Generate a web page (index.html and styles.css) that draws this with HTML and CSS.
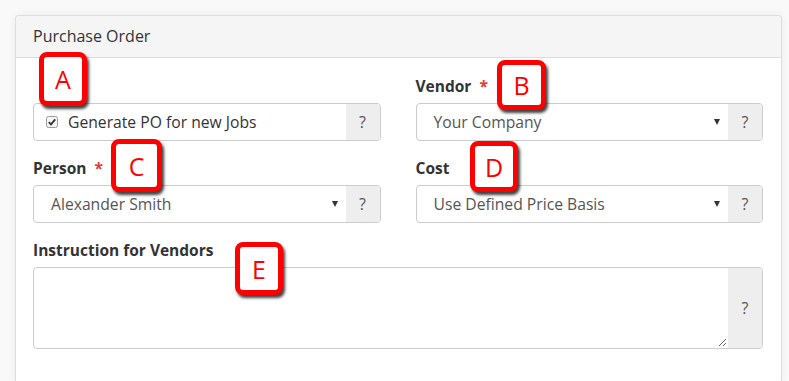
FILE: index.html
```html
<!DOCTYPE html>
<html>

<head>
  <title>Purchase Order</title>
  <link rel="stylesheet" href="styles.css">
</head>

<body>
  <div class="panel">
    <div class="panel-heading">Purchase Order</div>
    <div class="panel-body">
      <div class="form-grid">
        <div class="field">
          <div class="label"></div>
          <div class="group">
            <div class="control check-control">
              <svg class="checkbox" width="12" height="12" viewBox="0 0 12 12">
                <rect x="0.5" y="0.5" width="11" height="11" rx="2" fill="#f4f4f4" stroke="#9a9a9a" />
                <path d="M2.8 6.2 L5 8.4 L9.2 3.4" fill="none" stroke="#333" stroke-width="1.8" />
              </svg>
              <span>Generate PO for new Jobs</span>
            </div>
            <div class="addon">?</div>
          </div>
        </div>
        <div class="field">
          <div class="label">Vendor <span class="req">*</span></div>
          <div class="group">
            <div class="control select">
              <span>Your Company</span>
              <span class="caret"></span>
            </div>
            <div class="addon">?</div>
          </div>
        </div>
        <div class="field">
          <div class="label">Person <span class="req">*</span></div>
          <div class="group">
            <div class="control select">
              <span>Alexander Smith</span>
              <span class="caret"></span>
            </div>
            <div class="addon">?</div>
          </div>
        </div>
        <div class="field">
          <div class="label">Cost</div>
          <div class="group">
            <div class="control select">
              <span>Use Defined Price Basis</span>
              <span class="caret"></span>
            </div>
            <div class="addon">?</div>
          </div>
        </div>
        <div class="field wide">
          <div class="label">Instruction for Vendors</div>
          <div class="group tall">
            <div class="control area">
              <svg class="grip" width="10" height="10" viewBox="0 0 10 10">
                <path d="M9 2 L2 9 M9 6 L6 9" stroke="#666" stroke-width="1" />
              </svg>
            </div>
            <div class="addon">?</div>
          </div>
        </div>
      </div>
    </div>
  </div>

  <!-- annotation callouts -->
  <div class="callout" style="left: 39px; top: 52px; width: 48px; height: 54px;">A</div>
  <div class="callout" style="left: 497px; top: 60px; width: 49px; height: 50px;">B</div>
  <div class="callout" style="left: 111px; top: 139px; width: 51px; height: 53px;">C</div>
  <div class="callout" style="left: 470px; top: 141px; width: 48px; height: 51px;">D</div>
  <div class="callout" style="left: 235px; top: 242px; width: 48px; height: 53px;">E</div>
</body>

</html>
```

FILE: styles.css
```css
* {
  box-sizing: border-box;
}

html,
body {
  height: 381px;
  overflow: hidden;
}

body {
  font-family: "Open Sans", "Liberation Sans", sans-serif;
  background-color: #f9f9f9;
  margin: 0;
  padding: 15px 7px 0 15px;
  color: #333;
}

.panel {
  background-color: #fff;
  border: 1px solid #ddd;
  border-bottom: none;
  border-radius: 4px 4px 0 0;
  box-shadow: 0 0 8px rgba(0, 0, 0, 0.06);
  height: 366px;
}

.panel-heading {
  background-color: #f5f5f5;
  border-bottom: 1px solid #ddd;
  border-radius: 4px 4px 0 0;
  height: 42px;
  padding: 8px 17px;
  font-size: 16px;
  line-height: 24px;
  color: #333;
}

.panel-body {
  padding: 18px 18px 0 17px;
}

.form-grid {
  display: grid;
  grid-template-columns: 1fr 1fr;
  column-gap: 35px;
  row-gap: 17px;
}

.wide {
  grid-column: 1 / 3;
}

.label {
  height: 20px;
  line-height: 20px;
  font-size: 15.5px;
  font-weight: bold;
  color: #333;
  margin-bottom: 7px;
}

.req {
  color: #e53935;
  margin-left: 4px;
}

.group {
  display: flex;
  height: 38px;
  border: 1px solid #ccc;
  border-radius: 4px;
  overflow: hidden;
}

.group.tall {
  height: 82px;
}

.control {
  flex: 1;
  display: flex;
  align-items: center;
  font-size: 15.7px;
  color: #555;
  position: relative;
}

.check-control {
  padding-left: 12px;
  color: #333;
}

.checkbox {
  margin-right: 10px;
}

.select {
  padding: 0 8px 0 17px;
  justify-content: space-between;
}

.caret {
  width: 0;
  height: 0;
  border-left: 3.5px solid transparent;
  border-right: 3.5px solid transparent;
  border-top: 6px solid #333;
}

.area .grip {
  position: absolute;
  right: 1px;
  bottom: 1px;
}

.addon {
  width: 34px;
  background-color: #eee;
  color: #555;
  font-size: 16px;
  display: flex;
  align-items: center;
  justify-content: center;
}

.callout {
  position: absolute;
  border: 5px solid #ff0000;
  border-radius: 8px;
  background-color: #fff;
  box-shadow: 2px 3px 3px rgba(0, 0, 0, 0.75);
  color: #ff0000;
  font-size: 25px;
  display: flex;
  align-items: center;
  justify-content: center;
}
```
